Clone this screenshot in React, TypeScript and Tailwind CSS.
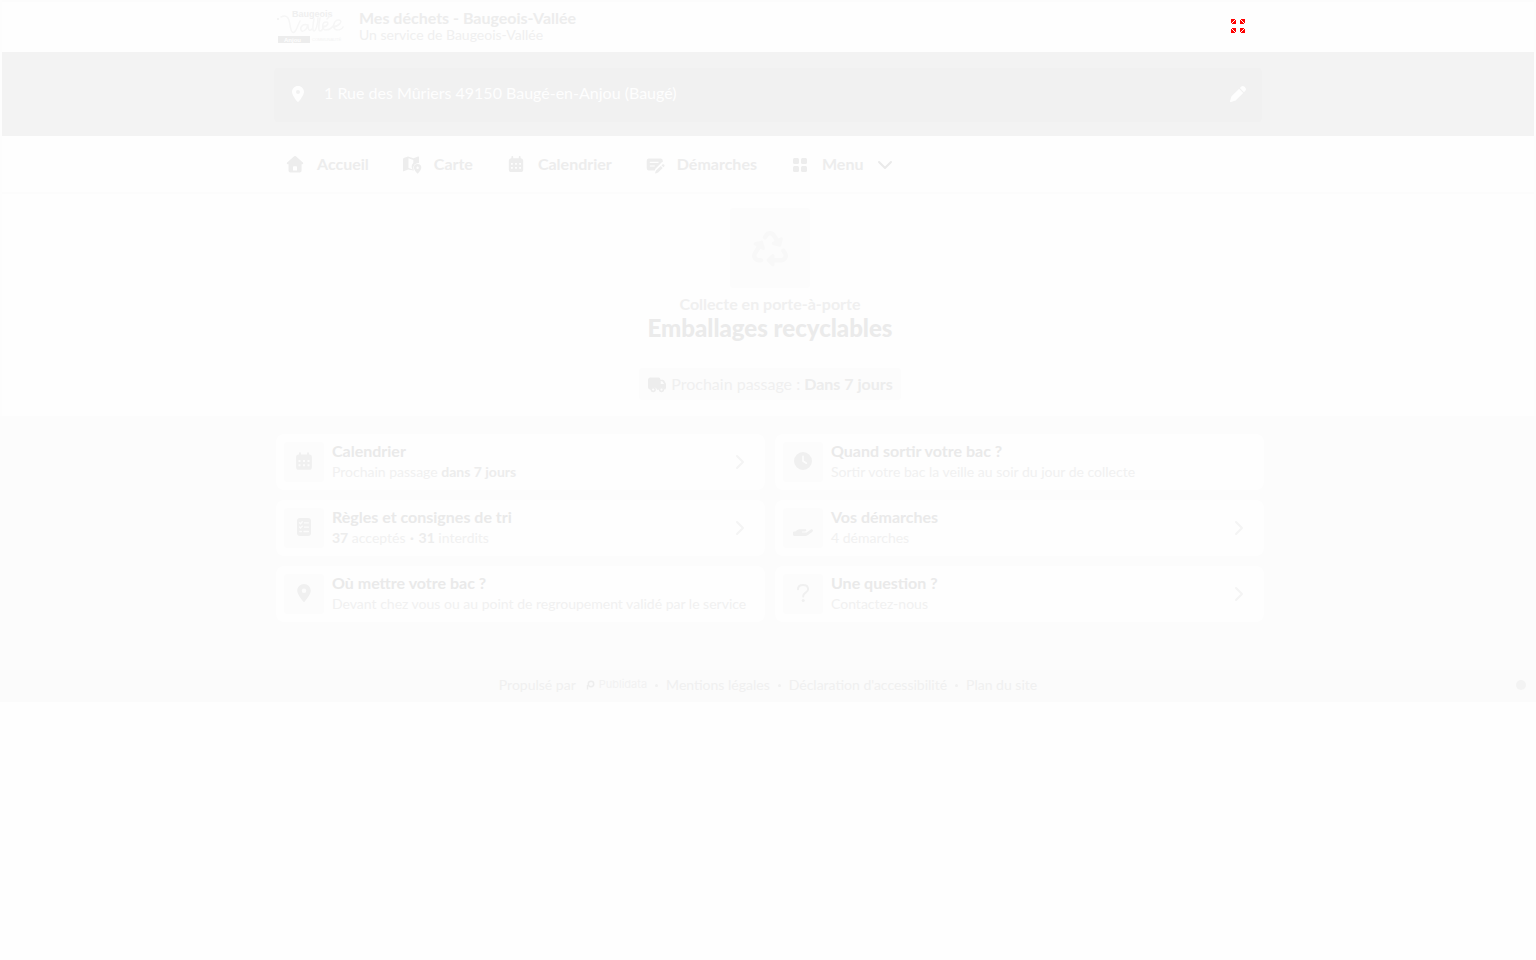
import type { ReactNode } from "react";
import {
  FaClock,
  FaHandHolding,
  FaLocationDot,
  FaPen,
  FaRecycle,
} from "react-icons/fa6";

type Card = {
  title: string;
  text: ReactNode;
  icon: ReactNode;
  arrow: boolean;
};

function HomeIcon() {
  return (
    <svg viewBox="0 0 20 20" className="size-5" fill="currentColor">
      <path
        fillRule="evenodd"
        d="M9.2 2.3a1.3 1.3 0 0 1 1.7 0l7 6.2c.7.7.3 1.7-.6 1.7h-.7v6.3a2 2 0 0 1-2 2H5.500a2 2 0 0 1-2-2v-6.300h-.8c-.9 0-1.300-1-.6-1.700zM8.700 12.300a.7.7 0 0 0-.7.7v3.600h4V13a.7.7 0 0 0-.7-.7z"
      />
    </svg>
  );
}

function MapIcon() {
  return (
    <svg viewBox="0 0 20 20" className="size-5" fill="currentColor">
      <path
        fillRule="evenodd"
        d="M1 5.200c0-.5.300-.9.700-1.100L6 2.400l5.500 1.900 4.600-1.800c.5-.2.900.1.900.600v5.900a4.900 4.900 0 0 0-5.500 6.100l.3 1.500L6.200 15.600l-4.400 1.700c-.4.200-.8-.1-.8-.6zM6.500 4.300v9.700l4.200 1.500a5 5 0 0 1 .6-6.400V6z"
      />
      <path
        fillRule="evenodd"
        d="M15.600 10.100a3.700 3.700 0 0 1 3.700 3.700c0 2-2.200 4.400-3.200 5.400a.7.7 0 0 1-1 0c-1-1-3.200-3.400-3.200-5.400a3.700 3.700 0 0 1 3.700-3.700zm0 2.500a1.200 1.200 0 1 0 0 2.400 1.200 1.200 0 0 0 0-2.400z"
      />
    </svg>
  );
}

function CalendarIcon({ className = "size-5" }: { className?: string }) {
  return (
    <svg viewBox="0 0 20 20" className={className} fill="currentColor">
      <path
        fillRule="evenodd"
        d="M5.400 3a.9.9 0 0 1 1.800 0v1.200h5.600V3a.9.9 0 0 1 1.800 0v1.200a2.500 2.500 0 0 1 2.600 2.500v8.700a2.600 2.600 0 0 1-2.600 2.600H5.400a2.600 2.600 0 0 1-2.600-2.600V6.700a2.500 2.500 0 0 1 2.600-2.500zM5 9v1.800h1.800V9zm4.100 0v1.800h1.800V9zm4.100 0v1.800H15V9zM5 13v1.800h1.800V13zm4.100 0v1.800h1.800V13zm4.100 0v1.800H15V13z"
      />
    </svg>
  );
}

function FormIcon() {
  return (
    <svg viewBox="0 0 20 20" className="size-5" fill="currentColor">
      <path
        fillRule="evenodd"
        d="M4 4.500h11.500A2.300 2.300 0 0 1 17.800 6.700v1.400c-.6.1-1.200.5-1.700 1L10.200 15l-.5 1.500H4a2.300 2.300 0 0 1-2.300-2.200V6.700A2.300 2.300 0 0 1 4 4.500zm.8 3.200v1.200h8.700V7.700zm0 3.700v1.200h5v-1.200z"
      />
      <path d="m15.800 12 1.900 1.900-4.600 4.600-2.400.9c-.4.100-.7-.2-.6-.600l.9-2.200zM16.500 11.300l.8-.8a1.350 1.350 0 0 1 1.900 1.900l-.8.8z" />
    </svg>
  );
}

function MenuIcon() {
  return (
    <svg viewBox="0 0 20 20" className="size-5" fill="currentColor">
      <rect x="3" y="4" width="6" height="6" rx="1.500" />
      <rect x="11" y="4" width="6" height="6" rx="1.500" />
      <rect x="3" y="12" width="6" height="6" rx="1.500" />
      <rect x="11" y="12" width="6" height="6" rx="1.500" />
    </svg>
  );
}

function ListIcon() {
  return (
    <svg viewBox="0 0 20 20" className="size-5" fill="none">
      <rect x="3" y="1" width="14" height="18" rx="3" fill="currentColor" />
      <path
        d="m5.500 5.700 1 1 1.800-1.900M5.500 10l1 1 1.800-1.900M5.800 14.500h1.700M10.500 5.800h4M10.500 10.200h4M10 14.500h4.500"
        stroke="#fcfcfc"
        strokeWidth="1.300"
        strokeLinecap="round"
      />
    </svg>
  );
}

function TruckIcon() {
  return (
    <svg viewBox="0 0 20 20" className="size-5" fill="currentColor">
      <path d="M3.500 3.500h7.700A2.300 2.300 0 0 1 13.500 5.800h1.900c.7 0 1.300.3 1.700.8l1.500 2.300c.3.400.4.900.4 1.400v3.200c0 1.200-.6 2-1.300 2.200a3.100 3.100 0 0 0-6 0h-1.600a3.100 3.100 0 0 0-6 0H4C2.300 15.700 1 14.700 1 13V6a2.500 2.500 0 0 1 2.500-2.500z" />
      <path d="M13.700 7.300h1.600l1.800 2.700h-3.400z" fill="#fcfcfc" />
      <circle cx="6.200" cy="15.600" r="1.900" fill="#fcfcfc" stroke="currentColor" strokeWidth="1.500" />
      <circle cx="14.500" cy="15.600" r="1.900" fill="#fcfcfc" stroke="currentColor" strokeWidth="1.500" />
    </svg>
  );
}

function QuestionIcon() {
  return (
    <svg viewBox="0 0 20 20" className="size-5" fill="none">
      <path
        d="M5 6.300C5 3.500 7 2 10 2s5.100 1.500 5.100 4.300c0 3.500-4.900 3.300-4.900 6.700v.5"
        stroke="currentColor"
        strokeWidth="2"
        strokeLinecap="round"
      />
      <circle cx="10.200" cy="17.500" r="1.500" fill="currentColor" />
    </svg>
  );
}

function ExpandIcon() {
  return (
    <svg viewBox="0 0 14 14" className="size-[14px]" fill="#ff0000" shapeRendering="crispEdges">
      <path d="M0 0h4v1H3v1H2v1H1v1H0zM5 1v4H1V4h1V3h1V2h1V1z" />
      <path d="M14 0h-4v1h1v1h1v1h1v1h1zM9 1v4h4V4h-1V3h-1V2h-1V1z" />
      <path d="M0 14h4v-1H3v-1H2v-1H1v-1H0zM5 13V9H1v1h1v1h1v1h1v1z" />
      <path d="M14 14h-4v-1h1v-1h1v-1h1v-1h1zM9 13V9h4v1h-1v1h-1v1h-1v1z" />
    </svg>
  );
}

function Logo() {
  return (
    <svg viewBox="0 0 68 36" className="h-9 w-[68px]" fontFamily="Liberation Sans, sans-serif">
      <text x="16" y="9" fontSize="9" fontWeight="700" fill="#f0f0f0">
        Baugeois
      </text>
      <circle cx="2" cy="11" r="1" fill="#f0f0f0" />
      <g fill="none" stroke="#f6f6f6" strokeWidth="1.500" strokeLinecap="round">
        <path d="M5 9c6-3 8 1 9 8s3 10 6 5l4-9" />
        <path d="M32 17c-5-2-8 2-7 5s6 0 7-5c0 4 1 7 4 4" />
        <path d="M38 11c-1 5-2 12 0 12s4-8 4-13M44 10c-1 5-2 13 0 13s3-2 4-5" />
        <path d="M47 19c4 0 7-5 3-5s-5 8 0 8 6-3 7-4M56 19c6 0 12-6 7-7s-8 9-2 10c3 0 5-1 6-3M51 11l3-3" />
      </g>
      <rect x="2" y="28" width="32" height="7" fill="#ededed" />
      <text x="8" y="34" fontSize="6" fontWeight="700" fill="#fefefe">
        Anjou
      </text>
      <text x="36" y="33" fontSize="4" fill="#f3f3f3">
        COMMUNAUTÉ
      </text>
    </svg>
  );
}

function Chevron({ className }: { className: string }) {
  return (
    <svg
      viewBox="0 0 20 20"
      className={className}
      fill="none"
      stroke="currentColor"
      strokeWidth="2"
      strokeLinecap="round"
      strokeLinejoin="round"
    >
      <path d="m8 4 6 6-6 6" />
    </svg>
  );
}

const navItems = [
  { label: "Accueil", icon: <HomeIcon /> },
  { label: "Carte", icon: <MapIcon /> },
  { label: "Calendrier", icon: <CalendarIcon /> },
  { label: "Démarches", icon: <FormIcon /> },
];

const cards: Card[] = [
  {
    title: "Calendrier",
    text: (
      <>
        Prochain passage <b className="text-[#ededed]">dans 7 jours</b>
      </>
    ),
    icon: <CalendarIcon className="size-[22px]" />,
    arrow: true,
  },
  {
    title: "Quand sortir votre bac ?",
    text: "Sortir votre bac la veille au soir du jour de collecte",
    icon: <FaClock className="size-[18px]" />,
    arrow: false,
  },
  {
    title: "Règles et consignes de tri",
    text: (
      <>
        <b className="text-[#ededed]">37</b> acceptés{" "}
        <b className="px-px text-[#ededed]">·</b>{" "}
        <b className="text-[#ededed]">31</b> interdits
      </>
    ),
    icon: <ListIcon />,
    arrow: true,
  },
  {
    title: "Vos démarches",
    text: "4 démarches",
    icon: <FaHandHolding className="size-5" />,
    arrow: true,
  },
  {
    title: "Où mettre votre bac ?",
    text: "Devant chez vous ou au point de regroupement validé par le service",
    icon: <FaLocationDot className="size-[18px]" />,
    arrow: false,
  },
  {
    title: "Une question ?",
    text: "Contactez-nous",
    icon: <QuestionIcon />,
    arrow: true,
  },
];

function InfoCard({ card }: { card: Card }) {
  return (
    <a href="#" className="flex items-center gap-2 rounded-lg bg-[#fefefe] p-2">
      <span className="flex size-10 shrink-0 items-center justify-center rounded bg-[#fcfcfc] pb-[2px] text-[#f0f0f0]">
        {card.icon}
      </span>
      <span className="min-w-0 flex-1">
        <span className="block pb-[2px] text-base leading-[18px] font-bold text-[#eaeaea]">
          {card.title}
        </span>
        <span className="block text-sm leading-5 text-[#f1f1f1]">{card.text}</span>
      </span>
      {card.arrow && <Chevron className="mr-2 size-5 text-[#f4f4f4]" />}
    </a>
  );
}

export default function App() {
  return (
    <div className="min-h-screen bg-[#fefefe] font-['Lato',sans-serif] text-base text-[#eaeaea]">
      <div className="border-x-2 border-[#fdfdfd]">
        <header className="border-t-2 border-[#fcfcfc]">
          <div className="mx-auto flex h-[50px] max-w-[992px] items-center px-1 pb-[2px]">
            <Logo />
            <div className="ml-[15px] flex-1 pt-[2px]">
              <p className="text-base leading-4 font-bold text-[#ededed]">
                Mes déchets - Baugeois-Vallée
              </p>
              <p className="text-sm leading-[18px] text-[#f0f0f0]">
                Un service de Baugeois-Vallée
              </p>
            </div>
            <button aria-label="Agrandir" className="mr-[15px]">
              <ExpandIcon />
            </button>
          </div>
        </header>

        <div className="bg-[#f3f3f3] pt-4 pb-[14px]">
          <div className="mx-auto max-w-[992px] px-[2px]">
            <div className="flex h-[54px] items-center rounded bg-[#f1f1f1] px-4 text-[#fefefe]">
              <FaLocationDot className="mb-[2px] size-4" />
              <span className="ml-[18px] flex-1 pb-1">
                1 Rue des Mûriers 49150 Baugé-en-Anjou (Baugé)
              </span>
              <button aria-label="Modifier l'adresse" className="pb-[2px]">
                <FaPen className="size-4" />
              </button>
            </div>
          </div>
        </div>

        <nav className="border-b-2 border-[#fcfcfc]">
          <ul className="mx-auto flex h-14 max-w-[992px] items-center gap-[33px] pl-[13px] font-bold text-[#ededed]">
            {navItems.map((item) => (
              <li key={item.label}>
                <a href="#" className="flex items-center gap-3">
                  {item.icon}
                  {item.label}
                </a>
              </li>
            ))}
            <li>
              <button className="flex items-center gap-3">
                <MenuIcon />
                Menu
                <Chevron className="size-5 rotate-90 text-[#eaeaea]" />
              </button>
            </li>
          </ul>
        </nav>

        <section className="mx-auto flex max-w-[992px] flex-col items-center pt-[14px] pb-4 pl-1 text-center">
          <span className="flex size-20 items-center justify-center rounded bg-[#fcfcfc] pt-[2px] text-[#f8f8f8]">
            <FaRecycle className="size-9" />
          </span>
          <p className="mt-2 leading-4 font-bold text-[#f0f0f0]">
            Collecte en porte-à-porte
          </p>
          <h1 className="text-2xl leading-8 font-black text-[#ebebeb]">
            Emballages recyclables
          </h1>
          <p className="mt-6 flex h-8 items-center gap-1 rounded bg-[#fcfcfc] px-2 text-[#f0f0f0]">
            <span className="text-[#ededed]">
              <TruckIcon />
            </span>
            <span>
              Prochain passage : <b className="text-[#ededed]">Dans 7 jours</b>
            </span>
          </p>
        </section>
      </div>

      <main className="bg-[#fcfcfc] pt-[18px] pb-12">
        <div className="mx-auto grid max-w-[992px] grid-cols-2 gap-[10px] pl-1">
          {cards.map((card) => (
            <InfoCard key={card.title} card={card} />
          ))}
        </div>
      </main>

      <footer className="flex h-8 items-center bg-[#fbfbfb] pb-[2px] text-sm text-[#f0f0f0]">
        <div className="flex flex-1 items-center justify-center gap-2 pl-5">
          <span className="flex items-center gap-[10px]">
            Propulsé par
            <a href="#" className="flex items-center gap-1 font-['Inter',sans-serif] text-[11px] text-[#f2f2f2]">
              <svg viewBox="0 0 9 10" className="h-[10px] w-[9px]" fill="none" stroke="#ededed" strokeWidth="1.500">
                <circle cx="5" cy="4" r="2.700" />
                <path d="M1.500 9.500V5" />
              </svg>
              Publidata
            </a>
          </span>
          <span className="size-[3px] rounded-full bg-[#f1f1f1]" />
          <a href="#">Mentions légales</a>
          <span className="size-[3px] rounded-full bg-[#f1f1f1]" />
          <a href="#">Déclaration d'accessibilité</a>
          <span className="size-[3px] rounded-full bg-[#f1f1f1]" />
          <a href="#">Plan du site</a>
        </div>
        <button aria-label="Aide" className="mr-[10px] size-[10px] rounded-full bg-[#f3f3f3]" />
      </footer>
    </div>
  );
}
